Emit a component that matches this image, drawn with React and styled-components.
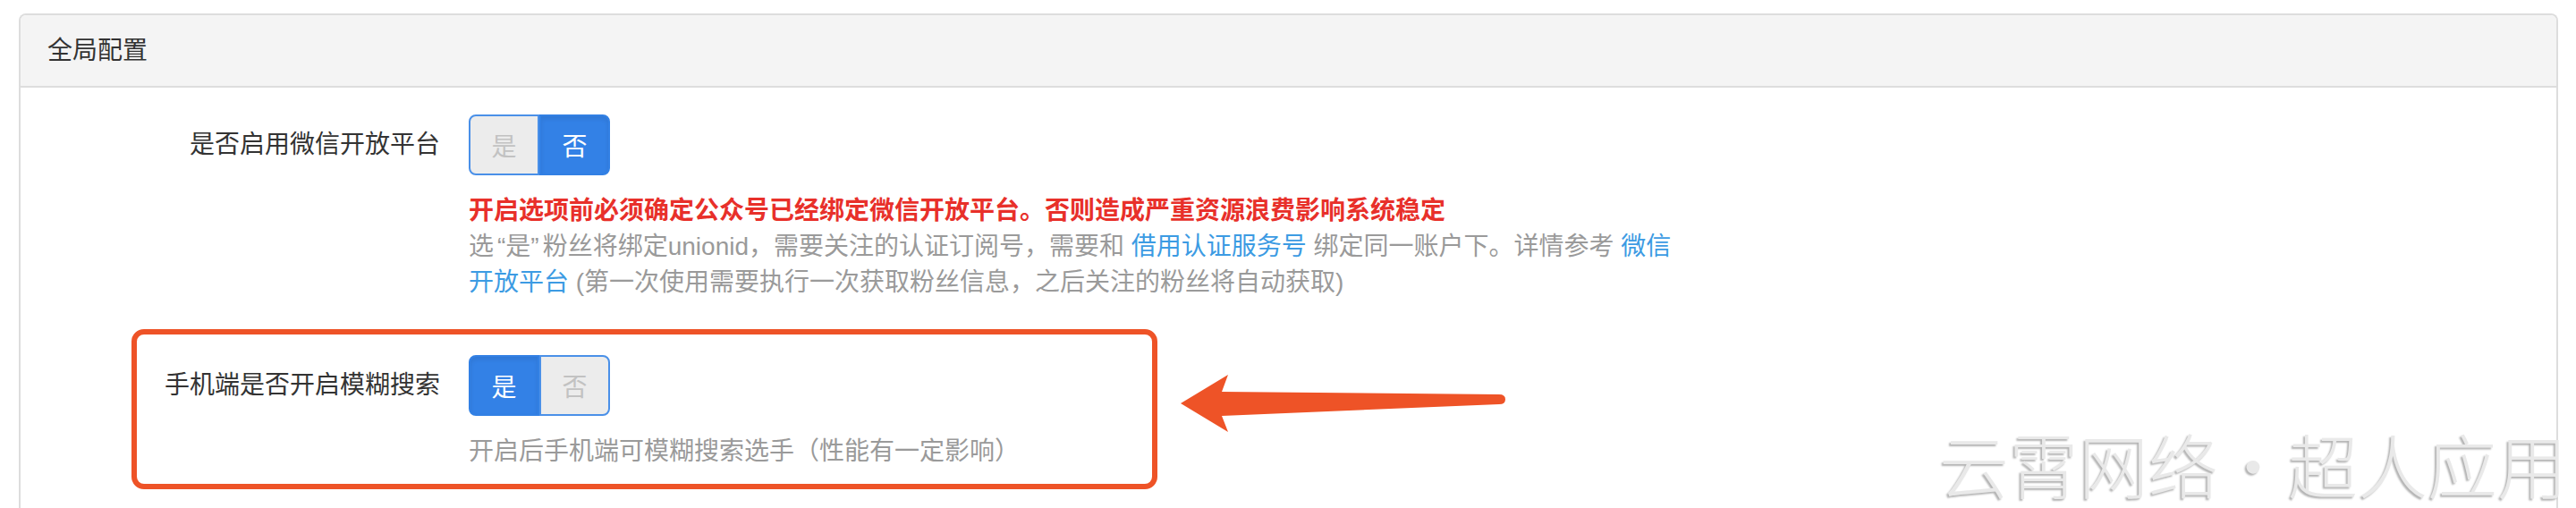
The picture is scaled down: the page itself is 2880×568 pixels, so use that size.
import React from 'react';
import styled, { createGlobalStyle } from 'styled-components';

const GlobalStyle = createGlobalStyle`
  html, body {
    margin: 0;
    padding: 0;
    background: #ffffff;
    overflow: hidden;
  }
  body {
    font-family: "Liberation Sans", "Noto Sans CJK SC", sans-serif;
    font-size: 28px;
    line-height: 40px;
    color: #333333;
  }
`;

const Page = styled.div`
  position: relative;
  width: 2880px;
  height: 568px;
  overflow: hidden;
  box-sizing: border-box;
  padding: 15px 20px 0 21px;
`;

const Panel = styled.section`
  border: 2px solid #dddddd;
  border-bottom: none;
  border-radius: 8px 8px 0 0;
  background: #ffffff;
`;

const PanelHeading = styled.div`
  background: #f4f4f4;
  border-bottom: 2px solid #dddddd;
  border-radius: 6px 6px 0 0;
  padding: 20px 30px 19px;
  line-height: 40px;
  color: #333333;
`;

const PanelBody = styled.div`
  padding: 30px 30px 80px;
`;

const FormGroup = styled.div`
  display: grid;
  grid-template-columns: 439px 1360px;
  column-gap: 32px;
  margin-bottom: 61px;
`;

const Label = styled.label`
  text-align: right;
  line-height: 68px;
  color: #333333;
`;

const Control = styled.div`
  display: flex;
  flex-direction: column;
  align-items: flex-start;
`;

const Toggle = styled.div`
  display: inline-flex;
  height: 68px;
`;

const Option = styled.button`
  width: 79px;
  height: 68px;
  box-sizing: border-box;
  display: flex;
  align-items: center;
  justify-content: center;
  font-family: inherit;
  font-size: 28px;
  padding: 0;
  cursor: pointer;
  border: 2px solid ${(p) => (p.$active ? '#3280e4' : '#4a90e8')};
  background: ${(p) => (p.$active ? '#3381e6' : '#ececec')};
  color: ${(p) => (p.$active ? '#ffffff' : '#c2c2c2')};
  box-shadow: ${(p) =>
    p.$active ? 'inset 0 3px 5px rgba(0, 0, 0, 0.08)' : 'none'};

  &:first-child {
    border-radius: 8px 0 0 8px;
  }
  &:last-child {
    border-radius: 0 8px 8px 0;
  }
`;

const HelpBlock = styled.div`
  margin-top: 20px;
  color: #9a9a9a;
  line-height: 40px;
`;

const Warning = styled.div`
  color: #e8302a;
  font-weight: bold;
`;

// quotes sit tight to the word, with a little room on the outer side
const Quote = styled.span`
  padding: ${(p) => (p.$open ? '0 0 0 4px' : '0 4px 0 0')};
`;

const Link = styled.a`
  color: #3c9be3;
  text-decoration: none;
`;

const Highlight = styled.div`
  position: absolute;
  left: 147px;
  top: 368px;
  width: 1147px;
  height: 179px;
  box-sizing: border-box;
  border: 6px solid #ee5327;
  border-radius: 14px;
  pointer-events: none;
`;

const Arrow = styled.svg`
  position: absolute;
  left: 1310px;
  top: 410px;
  width: 380px;
  height: 80px;
  pointer-events: none;
`;

const Watermark = styled.div`
  position: absolute;
  right: 10px;
  top: 470px;
  font-family: "Noto Sans CJK SC", sans-serif;
  font-size: 78px;
  line-height: 96px;
  font-weight: 300;
  color: #e9e9e9;
  text-shadow: -2px 2px 2px rgba(0, 0, 0, 0.3);
  white-space: nowrap;
`;

const YesNo = ({ value }) => (
  <Toggle>
    <Option type="button" $active={value}>
      是
    </Option>
    <Option type="button" $active={!value}>
      否
    </Option>
  </Toggle>
);

const App = () => (
  <Page>
    <GlobalStyle />
    <Panel>
      <PanelHeading>全局配置</PanelHeading>
      <PanelBody>
        <FormGroup>
          <Label>是否启用微信开放平台</Label>
          <Control>
            <YesNo value={false} />
            <HelpBlock>
              <Warning>
                开启选项前必须确定公众号已经绑定微信开放平台。否则造成严重资源浪费影响系统稳定
              </Warning>
              选<Quote $open>“</Quote>是<Quote>”</Quote>粉丝将绑定unionid，需要关注的认证订阅号，需要和{' '}
              <Link href="#">借用认证服务号</Link> 绑定同一账户下。详情参考{' '}
              <Link href="#">微信开放平台</Link>
              {' '}(第一次使用需要执行一次获取粉丝信息，之后关注的粉丝将自动获取)
            </HelpBlock>
          </Control>
        </FormGroup>
        <FormGroup>
          <Label>手机端是否开启模糊搜索</Label>
          <Control>
            <YesNo value={true} />
            <HelpBlock>开启后手机端可模糊搜索选手（性能有一定影响）</HelpBlock>
          </Control>
        </FormGroup>
      </PanelBody>
    </Panel>

    <Highlight />
    <Arrow viewBox="1310 410 380 80">
      <path
        d="M1320 451 L1373 419 L1366 438 L1676 441 Q1683 441 1683 446.5 Q1683 452 1676 452 L1366 465 L1373 483 Z"
        fill="#ee5327"
      />
    </Arrow>
    <Watermark>云霄网络·超人应用</Watermark>
  </Page>
);

export default App;
